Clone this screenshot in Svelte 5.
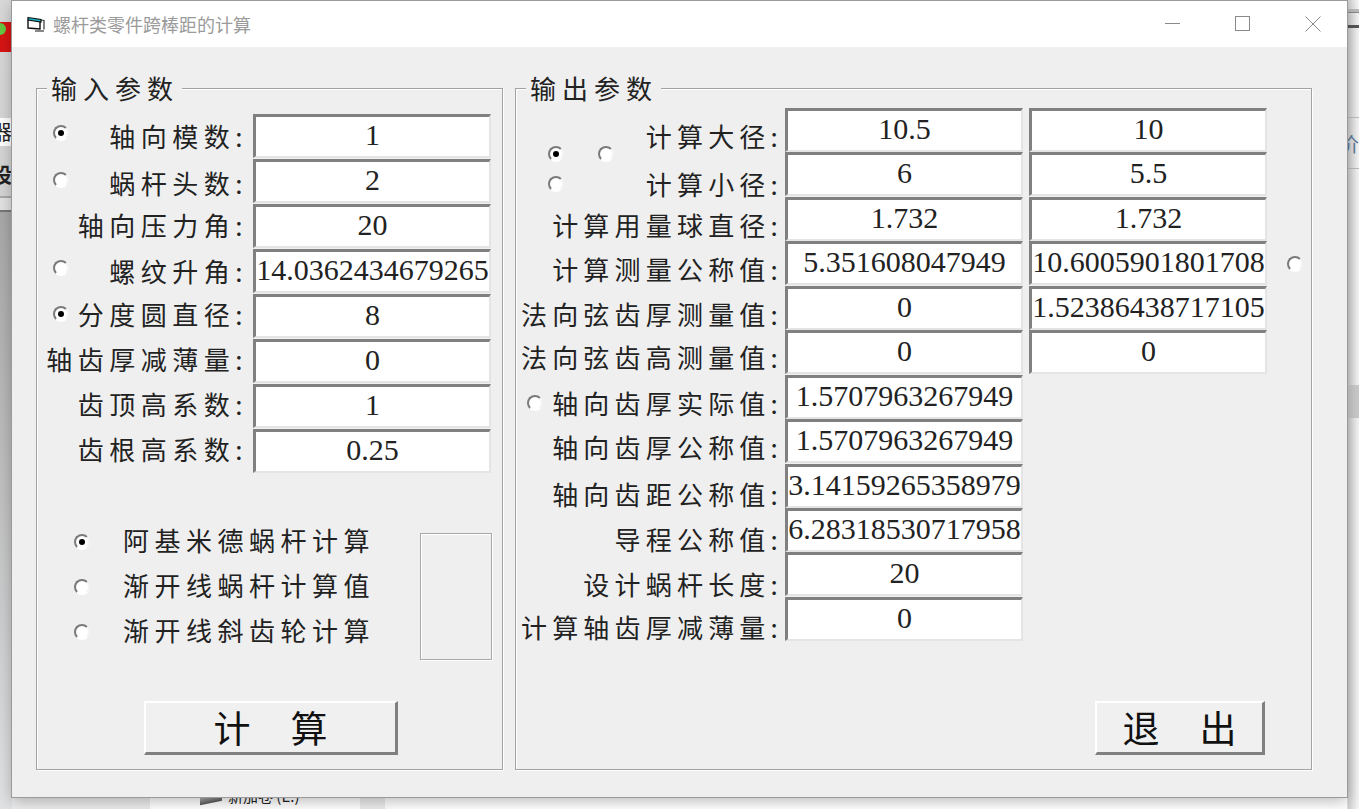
<script>
  const leftRows = [
    { label: '轴向模数:', value: '1', radio: 'on', dy: 0, ry: 11 },
    { label: '蜗杆头数:', value: '2', radio: 'off', dy: 2, ry: 13 },
    { label: '轴向压力角:', value: '20', dy: -1 },
    { label: '螺纹升角:', value: '14.0362434679265', radio: 'off', dy: 0, ry: 11 },
    { label: '分度圆直径:', value: '8', radio: 'on', dy: -2, ry: 12 },
    { label: '轴齿厚减薄量:', value: '0', dy: -2 },
    { label: '齿顶高系数:', value: '1', dy: -2 },
    { label: '齿根高系数:', value: '0.25', dy: -2 }
  ];
  const rightRows = [
    { label: '计算大径:', a: '10.5', b: '10', dy: 6 },
    { label: '计算小径:', a: '6', b: '5.5', dy: 9 },
    { label: '计算用量球直径:', a: '1.732', b: '1.732', dy: 6 },
    { label: '计算测量公称值:', a: '5.351608047949', b: '10.6005901801708', side: true, dy: 5 },
    { label: '法向弦齿厚测量值:', a: '0', b: '1.52386438717105', dy: 6 },
    { label: '法向弦齿高测量值:', a: '0', b: '0', dy: 5 },
    { label: '轴向齿厚实际值:', a: '1.5707963267949', radio: true, dy: 6 },
    { label: '轴向齿厚公称值:', a: '1.5707963267949', dy: 6 },
    { label: '轴向齿距公称值:', a: '3.14159265358979', dy: 8 },
    { label: '导程公称值:', a: '6.28318530717958', dy: 9 },
    { label: '设计蜗杆长度:', a: '20', dy: 9 },
    { label: '计算轴齿厚减薄量:', a: '0', dy: 8 }
  ];
  const methods = [
    { label: '阿基米德蜗杆计算', on: true },
    { label: '渐开线蜗杆计算值', on: false },
    { label: '渐开线斜齿轮计算', on: false }
  ];
</script>

{#snippet radio(on)}
  <span class="radio" class:on></span>
{/snippet}

<div class="screen">
  <div class="backdrop" aria-hidden="true">
    <div class="bit leftbg"></div>
    <div class="bit red"><span class="green"></span></div>
    <div class="bit clipL one">器</div>
    <div class="bit clipL two">设</div>
    <div class="bit stripeL"></div>
    <div class="bit lineR a"></div>
    <div class="bit lineR b"></div>
    <div class="bit lineR c"></div>
    <div class="bit lineR d"></div>
    <div class="bit clipR">价</div>
    <div class="bit greyR"></div>
    <div class="bit bottom"></div>
    <div class="bit panel"></div>
    <div class="bit drive"></div>
    <div class="bit driveText">新加卷 (E:)</div>
  </div>

  <div class="window">
    <header class="titlebar">
      <svg class="appicon" width="18" height="16" viewBox="0 0 18 16">
        <path d="M1 1.500l13 2v2.500l-13-2z" fill="#17b6c4" stroke="#111" stroke-width="1.200" />
        <path d="M1 3.500v8.500l12 1V5.800" fill="none" stroke="#111" stroke-width="1.400" />
        <path d="M14 4l3 .5v9" fill="none" stroke="#333" stroke-width="1.200" />
        <path d="M8 15h9" stroke="#555" stroke-width="1.400" />
      </svg>
      <span class="title">螺杆类零件跨棒距的计算</span>
      <div class="controls">
        <svg width="16" height="16" viewBox="0 0 16 16"><path d="M0 7.500h15" stroke="#8a8a8a" /></svg>
        <svg width="16" height="16" viewBox="0 0 16 16"><rect x=".5" y=".5" width="14" height="14" fill="none" stroke="#8a8a8a" /></svg>
        <svg width="16" height="16" viewBox="0 0 16 16"><path d="M.5.5l15 15M15.500.5l-15 15" stroke="#8a8a8a" fill="none" /></svg>
      </div>
    </header>

    <main class="client">
      <section class="group left">
        <h2 class="legend">输入参数</h2>
        <div class="left-rows">
          {#each leftRows as row}
            <div class="left-row">
              <span class="radio-slot" style:padding-top="{row.ry ?? 0}px">
                {#if row.radio}{@render radio(row.radio === 'on')}{/if}
              </span>
              <span class="lbl" style:margin-top="{row.dy}px">{row.label}</span>
              <div class="field">{row.value}</div>
            </div>
          {/each}
        </div>

        <div class="methods-wrap">
          <ul class="methods">
            {#each methods as m}
              <li>{@render radio(m.on)}<span class="mlabel">{m.label}</span></li>
            {/each}
          </ul>
          <div class="blank"></div>
        </div>

        <div class="foot foot-left">
          <button class="btn calc"><span>计</span><span>算</span></button>
        </div>
      </section>

      <section class="group right">
        <h2 class="legend">输出参数</h2>
        <div class="right-grid">
          <div class="radio-cluster">
            <span class="cl-a">{@render radio(true)}</span>
            <span class="cl-b">{@render radio(false)}</span>
            <span class="cl-c">{@render radio(false)}</span>
          </div>
          {#each rightRows as row, i}
            <div class="r-label" style:grid-row={i + 1} style:padding-top="{row.dy * 2}px">
              {#if row.radio}{@render radio(false)}{/if}
              <span class="lbl">{row.label}</span>
            </div>
            <div class="field col-a" style:grid-row={i + 1}>{row.a}</div>
            {#if row.b}
              <div class="field col-b" style:grid-row={i + 1}>{row.b}</div>
            {/if}
            {#if row.side}
              <div class="r-side" style:grid-row={i + 1}>{@render radio(false)}</div>
            {/if}
          {/each}
        </div>
        <div class="foot foot-right">
          <button class="btn exit"><span>退</span><span>出</span></button>
        </div>
      </section>
    </main>
  </div>
</div>

<style>
  :global(body) {
    margin: 0;
    background: #f4f4f4;
    overflow: hidden;
  }
  .screen {
    position: relative;
    width: 1359px;
    height: 809px;
    overflow: hidden;
    background: linear-gradient(90deg, #d9d9d9 0, #ececec 12px, #ececec 1347px, #cfcfcf 1348px, #f6f6f6 1359px);
    font-family: "Noto Sans CJK SC", sans-serif;
  }
  .backdrop { position: absolute; inset: 0; }
  .bit { position: absolute; }
  .leftbg {
    left: 0;
    top: 0;
    width: 12px;
    height: 809px;
    background: linear-gradient(180deg, #d8d8d8 0, #d4d4d4 196px, #a8a8a8 212px, #bcbcbc 450px, #e0e2e4 809px);
  }
  .red { left: 0; top: 22px; width: 12px; height: 30px; background: #d81414; overflow: hidden; }
  .green { position: absolute; left: 0; top: 1px; width: 6px; height: 12px; background: #63c742; border-radius: 0 6px 6px 0; }
  .clipL { left: -9px; width: 21px; overflow: hidden; text-align: right; font-size: 20px; line-height: 28px; color: #222; }
  .one { top: 118px; background: #fff; }
  .two { top: 161px; font-weight: 700; }
  .stripeL { left: 0; top: 196px; width: 12px; height: 16px; border-top: 2px solid #aaa; border-bottom: 2px solid #777; background: #e2e2e2; box-sizing: border-box; }
  .lineR { left: 1347px; width: 12px; height: 1px; background: #bbb; }
  .lineR.a { top: 9px; height: 3px; border-bottom: 1px solid #888; }
  .lineR.b { top: 25px; height: 3px; background: #555; }
  .lineR.c { top: 117px; }
  .lineR.d { top: 168px; }
  .clipR { left: 1347px; top: 130px; width: 12px; overflow: hidden; font-size: 20px; line-height: 28px; color: #5a7a9a; text-indent: -8px; white-space: nowrap; }
  .greyR { left: 1347px; top: 385px; width: 12px; height: 33px; background: #c9c9c9; }
  .bottom { left: 385px; top: 790px; width: 962px; height: 19px; background: #fff; }
  .panel { left: 150px; top: 780px; width: 210px; height: 29px; background: #fff; }
  .drive { left: 200px; top: 794px; width: 22px; height: 9px; background: linear-gradient(180deg, #c8c8c8, #555); transform: skewY(-12deg); }
  .driveText { left: 228px; top: 786px; font-size: 15px; line-height: 20px; color: #222; white-space: nowrap; }

  .window {
    position: relative;
    margin-left: 12px;
    top: 1px;
    width: 1335px;
    height: 796px;
    box-sizing: border-box;
    background: #efefef;
    box-shadow: 0 0 0 1px #9a9a9a, 0 4px 14px rgba(0, 0, 0, .28);
    display: flex;
    flex-direction: column;
  }
  .titlebar {
    height: 46px;
    flex: none;
    background: #fff;
    display: flex;
    align-items: center;
    padding-left: 15px;
  }
  .appicon { margin-right: 8px; }
  .title { font-size: 18px; color: #9b9b9b; line-height: 1; }
  .controls { margin-left: auto; display: flex; gap: 54px; padding-right: 26px; align-items: center; }

  .client {
    flex: 1;
    display: flex;
    gap: 12px;
    padding: 41px 35px 27px 24px;
    min-height: 0;
  }
  .group {
    position: relative;
    box-sizing: border-box;
    border: 1px solid #a2a2a2;
    box-shadow: 1px 1px 0 #fff, inset 1px 1px 0 #fff;
    display: flex;
    flex-direction: column;
  }
  .left { width: 467px; flex: none; }
  .right { flex: 1; min-width: 0; }
  .legend {
    position: absolute;
    left: 10px;
    top: -16px;
    margin: 0;
    padding: 0 3px 0 4px;
    background: #efefef;
    font-size: 26px;
    font-weight: 400;
    line-height: 30px;
    letter-spacing: 6px;
    color: #222;
    white-space: nowrap;
  }
  .radio {
    display: inline-block;
    box-sizing: border-box;
    width: 16px;
    height: 16px;
    border-radius: 50%;
    background: #fff;
    border: 2px solid;
    border-color: #7a7a7a #f4f4f4 #fff #7a7a7a;
    position: relative;
    flex: none;
  }
  .radio.on::after {
    content: "";
    position: absolute;
    left: 3px;
    top: 3px;
    width: 6px;
    height: 6px;
    border-radius: 50%;
    background: #000;
  }
  .lbl {
    font-size: 26px;
    line-height: 44px;
    letter-spacing: 5.500px;
    color: #222;
    white-space: nowrap;
  }
  .field {
    box-sizing: border-box;
    background: #fff;
    border-style: solid;
    border-width: 3px 2px 2px 3px;
    border-color: #808080 #e4e4e4 #e4e4e4 #808080;
    font-family: "Liberation Serif", "Times New Roman", serif;
    font-size: 30px;
    line-height: 36px;
    color: #222;
    text-align: center;
    white-space: nowrap;
    overflow: hidden;
  }

  .left-rows {
    display: grid;
    grid-auto-rows: 45px;
    padding: 25px 0 0 16px;
  }
  .left-row {
    display: grid;
    grid-template-columns: 189px 11px 238px;
    grid-template-rows: 45px;
  }
  .left-row .radio-slot { grid-column: 1; grid-row: 1; z-index: 1; height: 20px; display: flex; }
  .left-row .lbl { grid-column: 1; grid-row: 1; justify-self: end; margin-right: -6px; }
  .left-row .field { grid-column: 3; grid-row: 1; height: 44px; }

  .methods-wrap {
    display: flex;
    align-items: flex-start;
    padding: 59px 0 0 37px;
  }
  .methods { list-style: none; padding: 0; width: 346px; flex: none; display: grid; grid-auto-rows: 45px; margin: -16px 0 0; }
  .methods li { display: flex; align-items: center; height: 45px; }
  .methods .radio { margin-top: 5px; }
  .mlabel { margin-left: 33px; font-size: 26px; letter-spacing: 5.500px; color: #222; white-space: nowrap; }
  .blank {
    box-sizing: border-box;
    width: 72px;
    height: 127px;
    border: 1px solid #a8a8a8;
    box-shadow: 1px 1px 0 #fff, inset 1px 1px 0 #fff;
  }

  .foot { margin-top: auto; display: flex; padding-bottom: 14px; }
  .foot-left { padding-left: 107px; }
  .foot-right { justify-content: flex-end; padding-right: 46px; }
  .btn {
    box-sizing: border-box;
    height: 54px;
    background: #f0f0f0;
    border-style: solid;
    border-width: 2px 3px 3px 2px;
    border-color: #fff #808080 #808080 #fff;
    font-family: inherit;
    font-size: 37px;
    line-height: 1;
    color: #111;
    display: flex;
    align-items: center;
    justify-content: center;
    padding: 0;
  }
  .calc { width: 254px; gap: 40px; }
  .exit { width: 170px; gap: 40px; }

  .right-grid {
    display: grid;
    grid-template-columns: 264px 238px 6px 238px 38px;
    grid-auto-rows: 44.450px;
    padding: 19px 0 0 5px;
  }
  .radio-cluster {
    grid-column: 1;
    grid-row: 1 / 3;
    z-index: 1;
    display: grid;
    grid-template-columns: 16px 34px 16px;
    grid-template-rows: 16px 16px;
    row-gap: 14px;
    padding: 38px 0 0 27px;
    align-self: start;
    justify-self: start;
  }
  .cl-a { grid-column: 1; grid-row: 1; display: flex; }
  .cl-b { grid-column: 3; grid-row: 1; display: flex; }
  .cl-c { grid-column: 1; grid-row: 2; display: flex; }
  .r-label {
    grid-column: 1;
    display: flex;
    align-items: center;
    justify-content: flex-end;
    gap: 9px;
    margin-right: 2px;
    box-sizing: border-box;
  }
  .r-label .lbl { letter-spacing: 5.200px; }
  .right-grid .field { height: 44px; }
  .col-a { grid-column: 2; }
  .col-b { grid-column: 4; }
  .r-side { grid-column: 5; display: flex; align-items: center; padding-left: 20px; }
</style>
